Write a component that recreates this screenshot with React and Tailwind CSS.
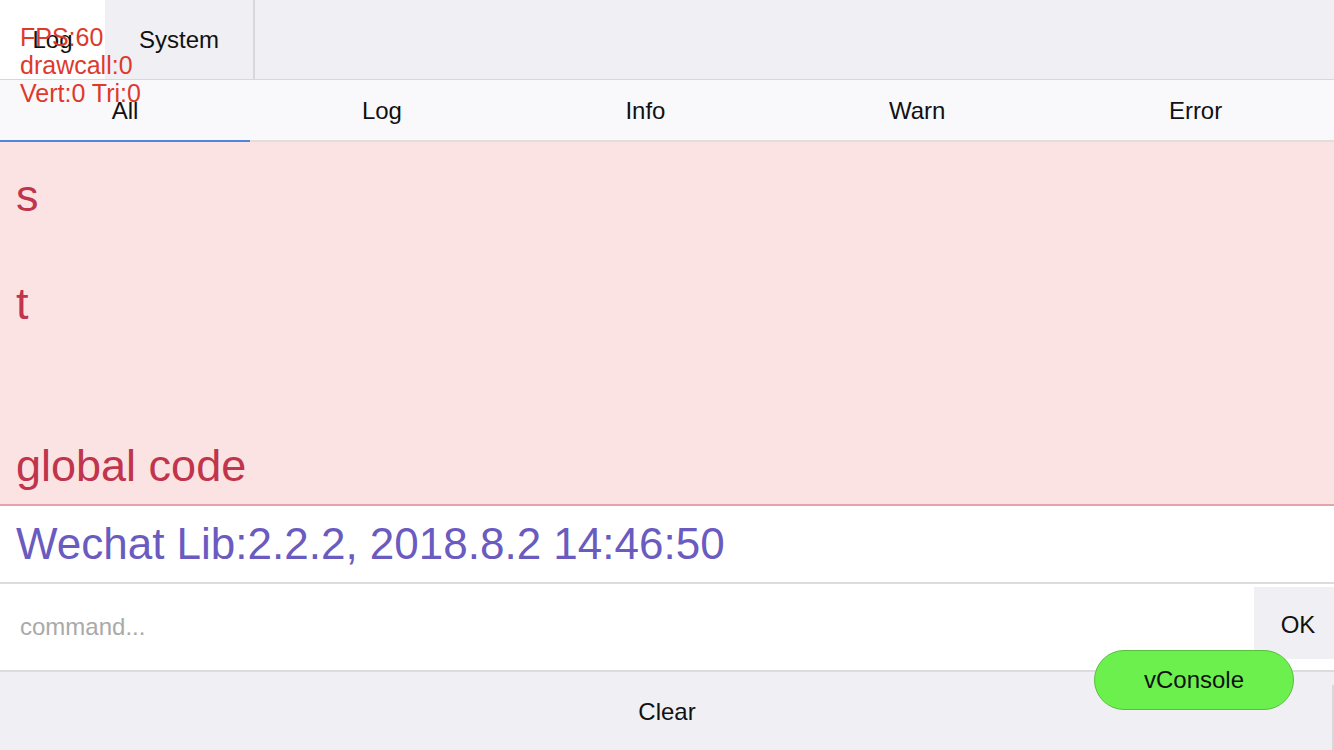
export default function App() {
  const subTabs = ["All", "Log", "Info", "Warn", "Error"];
  return (
    <div className="relative w-[1334px] h-[750px] overflow-hidden flex flex-col font-['Liberation_Sans',Arial,sans-serif] text-[#111]">
      <div className="h-[80px] shrink-0 flex bg-[#efeff4] border-b border-[#d8d8dc]">
        <div className="w-[105px] bg-white flex items-center justify-center text-[24px]">Log</div>
        <div className="w-[150px] flex items-center justify-center text-[24px] border-r-2 border-[#d8d8dc]">System</div>
      </div>
      <div className="h-[62px] shrink-0 flex bg-[#f9f9fc]">
        {subTabs.map((t, i) => (
          <div
            key={t}
            className={
              i === 0
                ? "flex-auto flex items-center justify-center pt-[2px] text-[24px] border-b-2 border-[#4f86dc]"
                : "flex-auto flex items-center justify-center pt-[2px] text-[24px] border-b-2 border-[#e2dede]"
            }
          >
            {t}
          </div>
        ))}
      </div>
      <div className="shrink-0 bg-[#fbe3e3] border-b-2 border-[#e9a2aa] pt-[27px] pb-[11px] pl-[16px] text-[45px] leading-[54px] text-[#c0344c] whitespace-pre">
        {"s\n\nt\n\n\nglobal code"}
      </div>
      <div className="h-[78px] shrink-0 bg-white flex items-center pl-[16px] text-[44px] text-[#6a5bc0] border-b-2 border-[#dcdcdc]">
        Wechat Lib:2.2.2, 2018.8.2 14:46:50
      </div>
      <div className="h-[88px] shrink-0 bg-white flex border-b-2 border-[#dcdcdc]">
        <div className="flex-1 flex items-center pl-[20px] text-[24px] text-[#a9a9a9]">command...</div>
        <div className="w-[80px] h-[72px] mt-[3px] pl-[8px] pt-[4px] bg-[#efeff4] flex items-center justify-center text-[24px]">OK</div>
      </div>
      <div className="flex-1 bg-[#efeff4] flex items-center justify-center text-[24px]">
        <span className="pt-[2px]">Clear</span>
      </div>
      <div className="absolute right-0 top-[685px] w-[2px] h-[65px] bg-[#d8d8dc]"></div>
      <div className="absolute left-[20px] top-[23px] text-[25px] leading-[28px] text-[#dd3a2c]">
        <div>FPS:60</div>
        <div>drawcall:0</div>
        <div>Vert:0 Tri:0</div>
      </div>
      <div className="absolute left-[1094px] top-[650px] w-[200px] h-[60px] rounded-full bg-[#6cf04e] border border-[#58bf3f] flex items-center justify-center text-[24px] text-[#111]">
        vConsole
      </div>
    </div>
  );
}
